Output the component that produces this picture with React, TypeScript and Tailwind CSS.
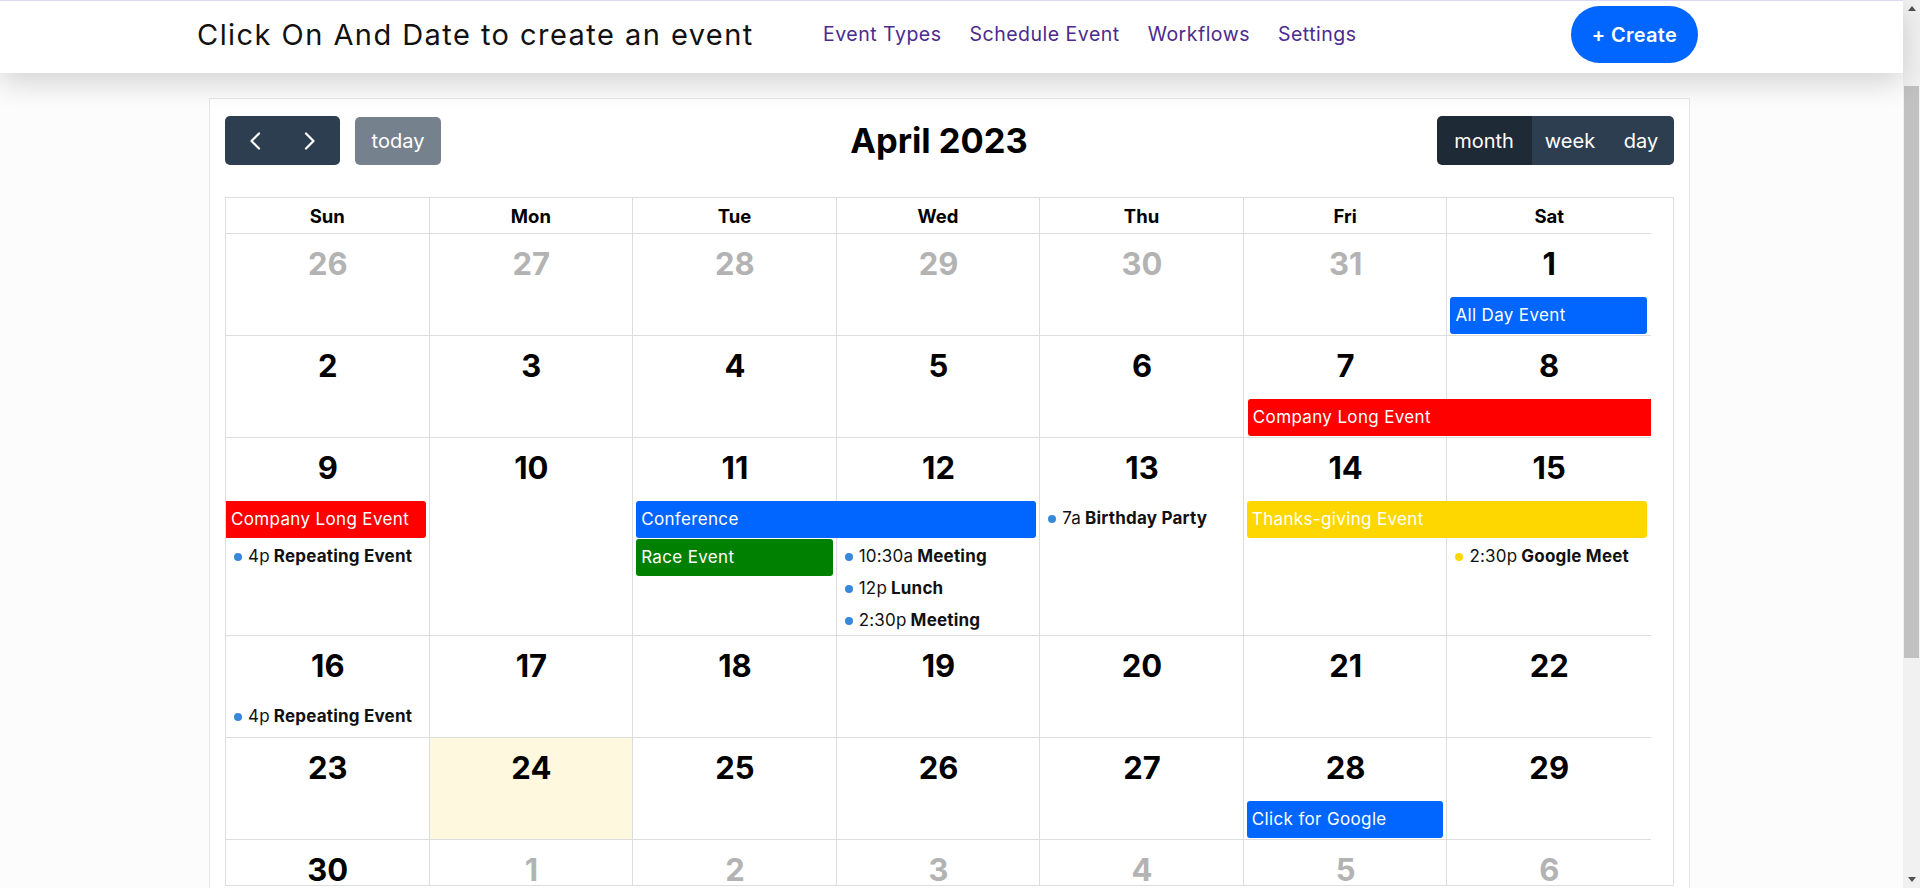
import React from "react";

type Item =
  | { kind: "bar"; col: number; span: number; row: number; text: string; color: string; cont?: "left" | "right" }
  | { kind: "list"; col: number; row: number; entries: { time: string; title: string; dot: string }[] };

type Week = { days: { n: number; other?: boolean; today?: boolean }[]; items: Item[] };

const colStart: Record<number, string> = {
  1: "col-start-1",
  2: "col-start-2",
  3: "col-start-3",
  4: "col-start-4",
  5: "col-start-5",
  6: "col-start-6",
  7: "col-start-7",
};
const colSpan: Record<number, string> = { 1: "col-span-1", 2: "col-span-2" };
const rowStart: Record<number, string> = { 1: "row-start-1", 2: "row-start-2", 3: "row-start-3" };

const weeks: Week[] = [
  {
    days: [
      { n: 26, other: true },
      { n: 27, other: true },
      { n: 28, other: true },
      { n: 29, other: true },
      { n: 30, other: true },
      { n: 31, other: true },
      { n: 1 },
    ],
    items: [{ kind: "bar", col: 7, span: 1, row: 2, text: "All Day Event", color: "bg-[#0066ff]" }],
  },
  {
    days: [2, 3, 4, 5, 6, 7, 8].map((n) => ({ n })),
    items: [{ kind: "bar", col: 6, span: 2, row: 2, text: "Company Long Event", color: "bg-[#ff0000]", cont: "right" }],
  },
  {
    days: [9, 10, 11, 12, 13, 14, 15].map((n) => ({ n })),
    items: [
      { kind: "bar", col: 1, span: 1, row: 2, text: "Company Long Event", color: "bg-[#ff0000]", cont: "left" },
      { kind: "bar", col: 3, span: 2, row: 2, text: "Conference", color: "bg-[#0066ff]" },
      { kind: "list", col: 5, row: 2, entries: [{ time: "7a", title: "Birthday Party", dot: "bg-[#3788d8]" }] },
      { kind: "bar", col: 6, span: 2, row: 2, text: "Thanks-giving Event", color: "bg-[#ffd700]" },
      { kind: "list", col: 1, row: 3, entries: [{ time: "4p", title: "Repeating Event", dot: "bg-[#3788d8]" }] },
      { kind: "bar", col: 3, span: 1, row: 3, text: "Race Event", color: "bg-[#008000]" },
      {
        kind: "list",
        col: 4,
        row: 3,
        entries: [
          { time: "10:30a", title: "Meeting", dot: "bg-[#3788d8]" },
          { time: "12p", title: "Lunch", dot: "bg-[#3788d8]" },
          { time: "2:30p", title: "Meeting", dot: "bg-[#3788d8]" },
        ],
      },
      { kind: "list", col: 7, row: 3, entries: [{ time: "2:30p", title: "Google Meet", dot: "bg-[#ffd700]" }] },
    ],
  },
  {
    days: [16, 17, 18, 19, 20, 21, 22].map((n) => ({ n })),
    items: [{ kind: "list", col: 1, row: 2, entries: [{ time: "4p", title: "Repeating Event", dot: "bg-[#3788d8]" }] }],
  },
  {
    days: [23, 24, 25, 26, 27, 28, 29].map((n) => ({ n, today: n === 24 })),
    items: [{ kind: "bar", col: 6, span: 1, row: 2, text: "Click for Google", color: "bg-[#0066ff]" }],
  },
  {
    days: [
      { n: 30 },
      { n: 1, other: true },
      { n: 2, other: true },
      { n: 3, other: true },
      { n: 4, other: true },
      { n: 5, other: true },
      { n: 6, other: true },
    ],
    items: [],
  },
];

function Bar({ text, color, cont }: { text: string; color: string; cont?: "left" | "right" }) {
  const shape =
    cont === "right"
      ? "ml-[4px] mr-0 rounded-l-[3px]"
      : cont === "left"
      ? "ml-0 mr-[4px] rounded-r-[3px]"
      : "ml-[3px] mr-[4px] rounded-[3px]";
  return (
    <div
      className={`h-[37px] ${shape} ${color} flex items-center px-[5px] text-[17px] tracking-[0.35px] text-white whitespace-nowrap overflow-hidden`}
    >
      {text}
    </div>
  );
}

function ListEntry({ time, title, dot }: { time: string; title: string; dot: string }) {
  return (
    <div className="h-[32px] flex items-center pt-[3px] pl-[8px] text-[17px] tracking-[0.2px] text-[#111] whitespace-nowrap">
      <span className={`w-[8px] h-[8px] rounded-full ${dot} mr-[6px] shrink-0`} />
      <span>{time}</span>
      <span className="font-bold ml-[4px]">{title}</span>
    </div>
  );
}

function WeekRow({ week }: { week: Week }) {
  return (
    <div className="grid grid-cols-7 grid-rows-[63px_38px_1fr] min-h-[102px]">
      {week.days.map((d, i) => (
        <div
          key={`bg${i}`}
          className={`${colStart[i + 1]} row-span-full border-b border-[#dddddd] ${i < 6 ? "border-r" : ""} ${
            d.today ? "bg-[#fef8df]" : ""
          }`}
        />
      ))}
      {week.days.map((d, i) => (
        <div
          key={`n${i}`}
          className={`${colStart[i + 1]} row-start-1 pt-[11px] text-center text-[31px] leading-[38px] font-bold ${
            d.other ? "text-[#b3b3b3]" : "text-black"
          }`}
        >
          {d.n}
        </div>
      ))}
      {week.items.map((it, k) =>
        it.kind === "bar" ? (
          <div key={k} className={`${colStart[it.col]} ${colSpan[it.span]} ${rowStart[it.row]} pb-px`}>
            <Bar text={it.text} color={it.color} cont={it.cont} />
          </div>
        ) : (
          <div key={k} className={`${colStart[it.col]} col-span-1 ${rowStart[it.row]} flex flex-col pb-px`}>
            {it.entries.map((e, j) => (
              <ListEntry key={j} time={e.time} title={e.title} dot={e.dot} />
            ))}
          </div>
        )
      )}
    </div>
  );
}

function Chevron({ dir }: { dir: "left" | "right" }) {
  return (
    <svg width="12" height="18" viewBox="0 0 12 18" fill="none">
      <polyline
        points={dir === "left" ? "10,1.5 2.5,9 10,16.5" : "2,1.5 9.5,9 2,16.5"}
        stroke="white"
        strokeWidth="2.2"
        strokeLinecap="round"
        strokeLinejoin="round"
      />
    </svg>
  );
}

function Scrollbar() {
  return (
    <div className="w-[17px] h-full bg-[#f1f1f1] flex flex-col items-center shrink-0">
      <div className="h-[17px] w-full flex items-center justify-center">
        <div className="w-0 h-0 border-l-[4px] border-r-[4px] border-b-[5px] border-l-transparent border-r-transparent border-b-[#505050]" />
      </div>
      <div className="h-[69px]" />
      <div className="w-[15px] h-[572px] bg-[#c1c1c1]" />
      <div className="flex-1" />
      <div className="h-[17px] w-full flex items-center justify-center">
        <div className="w-0 h-0 border-l-[4px] border-r-[4px] border-t-[5px] border-l-transparent border-r-transparent border-t-[#505050]" />
      </div>
    </div>
  );
}

export default function App() {
  return (
    <div className="h-[888px] w-full flex overflow-hidden bg-white [font-family:Inter,sans-serif]">
      <div className="flex-1 min-w-0 flex flex-col">
        <header className="relative z-10 h-[73px] shrink-0 border-t border-[#dcd6f8] bg-white shadow-[0_10px_28px_rgba(0,0,0,0.16)] pt-[5px]">
          <div className="ml-[197px] h-[57px] flex items-center w-[1501px]">
            <h1 className="w-[626px] text-[29px] font-normal text-[#111] tracking-[1.45px]">Click On And Date to create an event</h1>
            <nav className="flex items-center gap-[28px] text-[19.5px] tracking-[0.5px] text-[#4c2a8e]">
              <a>Event Types</a>
              <a>Schedule Event</a>
              <a>Workflows</a>
              <a>Settings</a>
            </nav>
            <div className="flex-1" />
            <button className="w-[127px] h-[57px] rounded-full bg-[#0066ff] text-white text-[20px] font-semibold tracking-[0.3px]">
              + Create
            </button>
          </div>
        </header>
        <main className="flex-1 bg-[#fcfcfc] pt-[25px]">
          <div className="ml-[209px] w-[1481px] bg-white border border-[#e6e6e6] px-[15px] pt-[17px] pb-[20px]">
            <div className="h-[49px] flex items-center justify-between">
              <div className="flex items-center gap-[15px]">
                <div className="flex h-[49px] w-[115px] rounded-[5px] bg-[#2c3e50] overflow-hidden">
                  <button className="flex-1 flex items-center justify-center pl-[2px]">
                    <Chevron dir="left" />
                  </button>
                  <button className="flex-1 flex items-center justify-center pr-[2px]">
                    <Chevron dir="right" />
                  </button>
                </div>
                <button className="h-[48px] w-[86px] rounded-[5px] bg-[#2c3e50] opacity-65 text-white text-[20px]">today</button>
              </div>
              <h2 className="text-[34.5px] font-bold text-black">April 2023</h2>
              <div className="flex h-[49px] rounded-[5px] overflow-hidden text-white text-[20px]">
                <button className="w-[94px] bg-[#1e2a36]">month</button>
                <button className="w-[77px] bg-[#2c3e50] border-l border-[#1f2b38]">week</button>
                <button className="w-[66px] bg-[#2c3e50]">day</button>
              </div>
            </div>
            <div className="mt-[32px] w-[1449px] border border-[#dddddd]">
              <div className="mr-[22px] grid grid-cols-7">
                {["Sun", "Mon", "Tue", "Wed", "Thu", "Fri", "Sat"].map((d, i) => (
                  <div
                    key={d}
                    className={`h-[36px] flex items-center justify-center pt-[2px] text-[18.5px] font-bold text-black border-b border-[#dddddd] ${
                      i < 6 ? "border-r" : ""
                    }`}
                  >
                    {d}
                  </div>
                ))}
              </div>
              <div className="h-[651px] overflow-hidden">
                <div className="mr-[22px]">
                  {weeks.map((w, i) => (
                    <WeekRow key={i} week={w} />
                  ))}
                </div>
              </div>
            </div>
          </div>
        </main>
      </div>
      <Scrollbar />
    </div>
  );
}
